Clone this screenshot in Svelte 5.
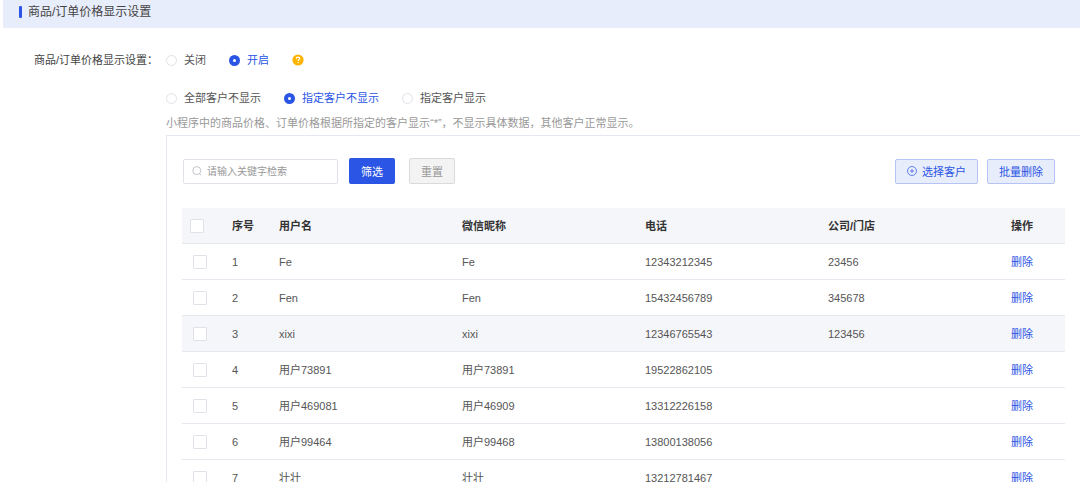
<!-- src/lib/components/settings/PriceDisplaySettings.svelte -->
<script lang="ts">
  interface Customer {
    id: number;
    name: string;
    nickname: string;
    phone: string;
    company: string;
  }

  let enabled = 'on';
  let scope = 'hide-selected';
  let keyword = '';
  let selected: number[] = [];

  const switchOptions = [
    { value: 'off', label: '关闭' },
    { value: 'on', label: '开启' }
  ];

  const scopeOptions = [
    { value: 'hide-all', label: '全部客户不显示' },
    { value: 'hide-selected', label: '指定客户不显示' },
    { value: 'show-selected', label: '指定客户显示' }
  ];

  let customers: Customer[] = [
    { id: 1, name: 'Fe', nickname: 'Fe', phone: '12343212345', company: '23456' },
    { id: 2, name: 'Fen', nickname: 'Fen', phone: '15432456789', company: '345678' },
    { id: 3, name: 'xixi', nickname: 'xixi', phone: '12346765543', company: '123456' },
    { id: 4, name: '用户73891', nickname: '用户73891', phone: '19522862105', company: '' },
    { id: 5, name: '用户469081', nickname: '用户46909', phone: '13312226158', company: '' },
    { id: 6, name: '用户99464', nickname: '用户99468', phone: '13800138056', company: '' },
    { id: 7, name: '壮壮', nickname: '壮壮', phone: '13212781467', company: '' }
  ];

  let activeId = 3;

  $: allSelected = customers.length > 0 && selected.length === customers.length;

  function toggleAll() {
    selected = allSelected ? [] : customers.map((c) => c.id);
  }

  function remove(id: number) {
    customers = customers.filter((c) => c.id !== id);
    selected = selected.filter((s) => s !== id);
  }

  function removeSelected() {
    customers = customers.filter((c) => !selected.includes(c.id));
    selected = [];
  }
</script>

<div class="page">
  <header class="section-header">
    <h1>商品/订单价格显示设置</h1>
  </header>

  <div class="form">
    <div class="form-label" id="switch-label">商品/订单价格显示设置：</div>

    <div class="form-content">
      <div class="options" role="radiogroup" aria-labelledby="switch-label">
        {#each switchOptions as option}
          <label class="option" class:checked={enabled === option.value}>
            <input type="radio" name="enabled" value={option.value} bind:group={enabled} />
            <span>{option.label}</span>
          </label>
        {/each}
        <svg class="help" viewBox="0 0 12 12" aria-hidden="true">
          <circle cx="6" cy="6" r="5.6" fill="#ffb400" />
          <path d="M4.3 4.8C4.3 3.7 5 3.1 6 3.1s1.8.6 1.8 1.5c0 1.1-1.7 1.1-1.7 2.3" fill="none" stroke="#fff" stroke-width="1.2" />
          <circle cx="6.1" cy="8.6" r="0.7" fill="#fff" />
        </svg>
      </div>

      <div class="options scope" role="radiogroup" aria-label="显示范围">
        {#each scopeOptions as option}
          <label class="option" class:checked={scope === option.value}>
            <input type="radio" name="scope" value={option.value} bind:group={scope} />
            <span>{option.label}</span>
          </label>
        {/each}
      </div>

      <p class="hint">小程序中的商品价格、订单价格根据所指定的客户显示“*”，不显示具体数据，其他客户正常显示。</p>

      <div class="panel">
        <div class="toolbar">
          <div class="search">
            <svg viewBox="0 0 10 10" aria-hidden="true">
              <circle cx="4.8" cy="4.6" r="4" />
              <path d="M7.4 7.6 9 9.3" />
            </svg>
            <input type="text" placeholder="请输入关键字检索" aria-label="关键字" bind:value={keyword} />
          </div>
          <button class="btn primary">筛选</button>
          <button class="btn reset" on:click={() => (keyword = '')}>重置</button>
          <div class="actions">
            <button class="btn light">
              <svg viewBox="0 0 10 10" aria-hidden="true">
                <circle cx="5" cy="5" r="4.5" />
                <path d="M5 3v4M3 5h4" />
              </svg>
              选择客户
            </button>
            <button class="btn light" on:click={removeSelected}>批量删除</button>
          </div>
        </div>

        <table>
          <thead>
            <tr>
              <th class="col-check">
                <input type="checkbox" aria-label="全选" checked={allSelected} on:change={toggleAll} />
              </th>
              <th class="col-index">序号</th>
              <th>用户名</th>
              <th>微信昵称</th>
              <th>电话</th>
              <th>公司/门店</th>
              <th class="col-action">操作</th>
            </tr>
          </thead>
          <tbody>
            {#each customers as customer, i (customer.id)}
              <tr class:active={customer.id === activeId}>
                <td class="col-check">
                  <input type="checkbox" aria-label={customer.name} value={customer.id} bind:group={selected} />
                </td>
                <td>{i + 1}</td>
                <td>{customer.name}</td>
                <td>{customer.nickname}</td>
                <td>{customer.phone}</td>
                <td>{customer.company}</td>
                <td><button class="link" on:click={() => remove(customer.id)}>删除</button></td>
              </tr>
            {/each}
          </tbody>
        </table>
      </div>
    </div>
  </div>
</div>

<style>
  :global(body) {
    margin: 0;
    background: #fff;
  }

  .page {
    height: 100vh;
    overflow: hidden;
    box-sizing: border-box;
    padding-left: 3px;
    font-family: 'Liberation Sans', 'Noto Sans CJK SC', sans-serif;
    font-size: 11px;
    line-height: 20px;
    color: #555;
  }

  .section-header {
    display: flex;
    align-items: center;
    height: 28px;
    padding: 0 16px 4px;
    box-sizing: border-box;
    background: #e8edfb;
  }

  .section-header::before {
    content: '';
    width: 3px;
    height: 12px;
    margin-right: 6px;
    border-radius: 1px;
    background: #2b55e5;
  }

  h1 {
    margin: 0;
    font-size: 12px;
    font-weight: 400;
    color: #444;
  }

  .form {
    display: grid;
    grid-template-columns: 132px minmax(0, 1fr);
    padding: 22px 0 0 31px;
  }

  .form-label {
    color: #444;
    white-space: nowrap;
  }

  .options {
    display: flex;
    align-items: center;
    gap: 23px;
    height: 20px;
  }

  .scope {
    margin-top: 18px;
  }

  .option {
    display: flex;
    align-items: center;
    gap: 7px;
    cursor: pointer;
  }

  .option.checked {
    color: #2b55e5;
  }

  input[type='radio'] {
    appearance: none;
    width: 11px;
    height: 11px;
    margin: 0;
    border: 1px solid #dfe2e8;
    border-radius: 50%;
    background: #fff;
  }

  input[type='radio']:checked {
    border: 4px solid #2b55e5;
  }

  .help {
    width: 12px;
    height: 12px;
  }

  .hint {
    margin: 5px 0 2px;
    color: #999;
  }

  .panel {
    padding: 22px 15px;
    border-top: 1px solid #e4e8f0;
    border-left: 1px solid #e4e8f0;
  }

  .toolbar {
    display: flex;
    align-items: center;
    padding: 0 10px 0 1px;
    margin-bottom: 24px;
  }

  .search {
    display: flex;
    align-items: center;
    gap: 5px;
    width: 155px;
    height: 25px;
    padding: 0 8px;
    box-sizing: border-box;
    border: 1px solid #dfe2e8;
    border-radius: 2px;
  }

  .search svg {
    flex: none;
    width: 10px;
    height: 10px;
    fill: none;
    stroke: #b4b8c0;
    stroke-width: 0.8;
  }

  .search input {
    flex: 1;
    min-width: 0;
    padding: 0;
    border: none;
    outline: none;
    background: none;
    font-family: inherit;
    font-size: 10px;
    color: #555;
  }

  .search input::placeholder {
    color: #999;
  }

  .btn {
    display: flex;
    align-items: center;
    justify-content: center;
    gap: 5px;
    height: 26px;
    padding: 0 11px;
    border: 1px solid transparent;
    border-radius: 2px;
    font-family: inherit;
    font-size: 11px;
    cursor: pointer;
  }

  .primary {
    margin-left: 11px;
    background: #2b55e5;
    color: #fff;
  }

  .reset {
    margin-left: 14px;
    border-color: #dadada;
    background: #f3f3f3;
    color: #999;
  }

  .actions {
    display: flex;
    gap: 9px;
    margin-left: auto;
  }

  .light {
    height: 25px;
    border-color: #b5c4f5;
    background: #e8edfb;
    color: #2b55e5;
  }

  .light svg {
    width: 10px;
    height: 10px;
    fill: none;
    stroke: #2b55e5;
    stroke-width: 0.7;
  }

  table {
    width: 100%;
    table-layout: fixed;
    border-collapse: separate;
    border-spacing: 0;
  }

  th,
  td {
    height: 36px;
    padding: 0 0 0 10px;
    box-sizing: border-box;
    border-bottom: 1px solid #e6e9ef;
    text-align: left;
    vertical-align: middle;
  }

  th {
    background: #f5f6fa;
    font-weight: 700;
    color: #333;
  }

  th.col-check {
    width: 40px;
    padding-left: 8px;
  }

  td.col-check {
    padding-left: 11px;
  }

  .col-index {
    width: 47px;
  }

  .col-action {
    width: 64px;
  }

  tr.active {
    background: #f5f6fa;
  }

  input[type='checkbox'] {
    appearance: none;
    display: block;
    width: 14px;
    height: 14px;
    margin: 0;
    border: 1px solid #dfe2e8;
    border-radius: 1px;
    background: #fff;
  }

  input[type='checkbox']:checked {
    border-color: #2b55e5;
    background: #2b55e5;
  }

  .link {
    padding: 0;
    border: none;
    background: none;
    font-family: inherit;
    font-size: 11px;
    color: #2b55e5;
    cursor: pointer;
  }
</style>
